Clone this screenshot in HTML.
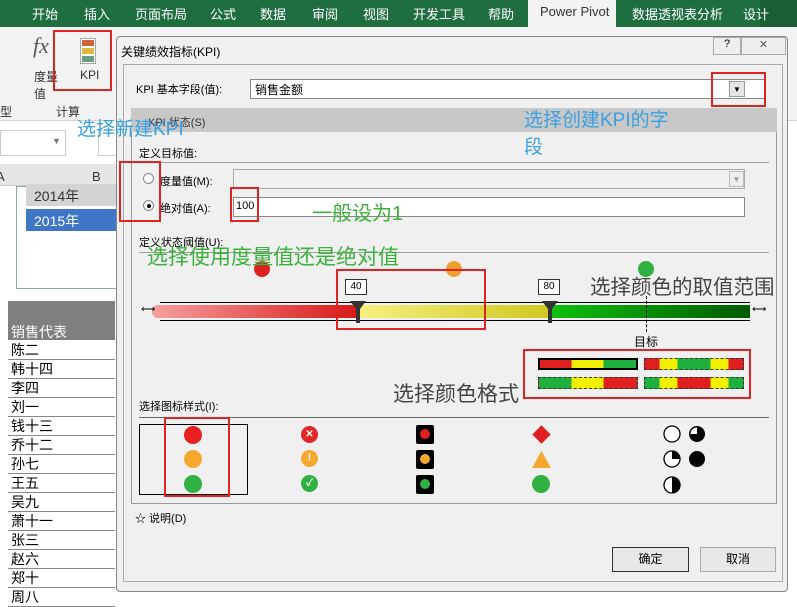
<!DOCTYPE html><html><head><meta charset="utf-8"><style>
*{margin:0;padding:0;box-sizing:border-box}
body{width:797px;height:594px;overflow:hidden;background:#fff;font-family:"Liberation Sans","Noto Sans CJK SC",sans-serif;font-size:12px;color:#000;position:relative}
.a{position:absolute;white-space:nowrap}
.rb{position:absolute;border:2.5px solid #e02424}
.dot{position:absolute;border-radius:50%}
.ln{position:absolute;height:1px;background:#a0a0a0}
</style></head><body>
<div class="a" style="left:0;top:0;width:797px;height:27px;background:#1f6e40"></div>
<div class="a" style="left:528px;top:0;width:88px;height:27px;background:#f3f3f3"></div>
<div class="a" style="top:4px;left:32px;color:#fff;font-size:13px">开始</div>
<div class="a" style="top:4px;left:84px;color:#fff;font-size:13px">插入</div>
<div class="a" style="top:4px;left:135px;color:#fff;font-size:13px">页面布局</div>
<div class="a" style="top:4px;left:210px;color:#fff;font-size:13px">公式</div>
<div class="a" style="top:4px;left:260px;color:#fff;font-size:13px">数据</div>
<div class="a" style="top:4px;left:312px;color:#fff;font-size:13px">审阅</div>
<div class="a" style="top:4px;left:363px;color:#fff;font-size:13px">视图</div>
<div class="a" style="top:4px;left:413px;color:#fff;font-size:13px">开发工具</div>
<div class="a" style="top:4px;left:488px;color:#fff;font-size:13px">帮助</div>
<div class="a" style="top:4px;left:540px;color:#333;font-size:13px">Power Pivot</div>
<div class="a" style="top:4px;left:632px;color:#fff;font-size:13px">数据透视表分析</div>
<div class="a" style="left:760px;top:0;width:37px;height:27px;background:#1a5e36"></div>
<div class="a" style="top:4px;left:743px;color:#fff;font-size:13px">设计</div>
<div class="a" style="left:0;top:27px;width:797px;height:94px;background:#f3f3f3;border-bottom:1px solid #d4d4d4"></div>
<div class="a" style="left:33px;top:33px;font-family:'Liberation Serif',serif;font-style:italic;font-size:22px;color:#555">fx</div>
<div class="a" style="left:80px;top:38px;width:16px;height:26px;background:#fff;border:1px solid #aaa"></div>
<div class="a" style="left:82px;top:40px;width:12px;height:6px;background:#c8663c"></div>
<div class="a" style="left:82px;top:48px;width:12px;height:6px;background:#e0b840"></div>
<div class="a" style="left:82px;top:56px;width:12px;height:6px;background:#6a9e84"></div>
<div class="a" style="left:34px;top:68px;color:#333">度量<br>值</div>
<div class="a" style="left:80px;top:68px;color:#333">KPI</div>
<div class="a" style="left:0;top:103px;color:#333">型</div>
<div class="a" style="left:56px;top:103px;color:#333">计算</div>
<div class="a" style="left:0;top:130px;width:66px;height:26px;background:#fff;border:1px solid #ccc"></div>
<div class="a" style="left:52px;top:136px;color:#777;font-size:9px">▼</div>
<div class="a" style="left:98px;top:130px;width:20px;height:26px;background:#fff;border:1px solid #ccc"></div>
<div class="a" style="left:0;top:164px;width:117px;height:22px;background:#e6e6e6;border-bottom:1px solid #ccc"></div>
<div class="a" style="left:-4px;top:169px;color:#333;font-size:13px">A</div>
<div class="a" style="left:92px;top:169px;color:#333;font-size:13px">B</div>
<div class="a" style="left:16px;top:186px;width:101px;height:103px;border:1px solid #8aa;background:#fff"></div>
<div class="a" style="left:26px;top:184px;width:91px;height:22px;background:#d4d4d4;color:#333;font-size:14px;padding:2px 8px">2014年</div>
<div class="a" style="left:26px;top:209px;width:91px;height:22px;background:#3f76c8;color:#fff;font-size:14px;padding:2px 8px">2015年</div>
<div class="a" style="left:8px;top:301px;width:107px;height:39px;background:#808080"></div>
<div class="a" style="left:11px;top:322px;color:#fff;font-size:14px">销售代表</div>
<div id="names"></div>
<div class="a" style="left:116px;top:36px;width:672px;height:556px;background:#f0f0f0;border:1px solid #888;border-radius:4px"></div>
<div class="a" style="left:121px;top:43px;font-size:12px">关键绩效指标(KPI)</div>
<div class="a" style="left:713px;top:37px;width:28px;height:18px;border:1px solid #aaa;background:#eee;text-align:center;font-size:11px">?</div>
<div class="a" style="left:741px;top:37px;width:45px;height:18px;border:1px solid #aaa;background:#eee;text-align:center;font-size:11px;color:#555">✕</div>
<div class="a" style="left:123px;top:64px;width:660px;height:518px;border:1px solid #aaa;background:#f0f0f0"></div>
<div class="a" style="left:136px;top:81px;font-size:11px">KPI 基本字段(值):</div>
<div class="a" style="left:250px;top:79px;width:515px;height:20px;background:#fff;border:1px solid #888;padding:1px 4px">销售金额</div>
<div class="a" style="left:729px;top:81px;width:16px;height:16px;background:#e6e6e6;border:1px solid #999;font-size:8px;text-align:center;line-height:15px">▼</div>
<div class="a" style="left:131px;top:108px;width:646px;height:24px;background:#c8c8c8"></div>
<div class="a" style="left:148px;top:114px;color:#333;font-size:11px">KPI 状态(S)</div>
<div class="a" style="left:131px;top:132px;width:646px;height:372px;border:1px solid #999;border-top:none"></div>
<div class="a" style="left:139px;top:145px;font-size:11px">定义目标值:</div>
<div class="ln" style="left:139px;top:162px;width:630px"></div>
<div class="a" style="left:143px;top:173px;width:11px;height:11px;border:1px solid #888;border-radius:50%;background:#fff"></div>
<div class="a" style="left:143px;top:200px;width:11px;height:11px;border:1px solid #888;border-radius:50%;background:#fff"></div>
<div class="dot" style="left:146.5px;top:203.5px;width:4px;height:4px;background:#000"></div>
<div class="a" style="left:160px;top:173px;font-size:11px">度量值(M):</div>
<div class="a" style="left:160px;top:200px;font-size:11px">绝对值(A):</div>
<div class="a" style="left:233px;top:169px;width:512px;height:20px;border:1px solid #aaa;background:#f0f0f0"></div>
<div class="a" style="left:729px;top:171px;width:15px;height:16px;border:1px solid #bbb;background:#eee;font-size:8px;color:#999;text-align:center;line-height:15px">▼</div>
<div class="a" style="left:233px;top:197px;width:512px;height:20px;border:1px solid #888;background:#fff;padding:2px 2px;font-size:11px">100</div>
<div class="a" style="left:139px;top:234px;font-size:11px">定义状态阈值(U):</div>
<div class="ln" style="left:139px;top:252px;width:630px"></div>
<div class="dot" style="left:254px;top:261px;width:16px;height:16px;background:#e02020"></div>
<div class="dot" style="left:446px;top:261px;width:16px;height:16px;background:#f0a030"></div>
<div class="dot" style="left:638px;top:261px;width:16px;height:16px;background:#30b040"></div>
<div class="a" style="left:160px;top:302px;width:590px;height:1px;background:#000"></div>
<div class="a" style="left:160px;top:320px;width:590px;height:1px;background:#000"></div>
<div class="a" style="left:152px;top:305px;width:206px;height:13px;background:linear-gradient(90deg,#f6a0a0,#d81818);border-radius:6px 0 0 6px"></div>
<div class="a" style="left:358px;top:305px;width:192px;height:13px;background:linear-gradient(90deg,#f6f080,#d0c820)"></div>
<div class="a" style="left:550px;top:305px;width:200px;height:13px;background:linear-gradient(90deg,#10c010,#005a00)"></div>
<div class="a" style="left:141px;top:304px;font-size:10px">⟷</div>
<div class="a" style="left:752px;top:304px;font-size:10px">⟷</div>
<div class="a" style="left:345px;top:279px;width:22px;height:16px;border:1px solid #333;background:#fff;font-size:10px;text-align:center;line-height:14px">40</div>
<div class="a" style="left:538px;top:279px;width:22px;height:16px;border:1px solid #333;background:#fff;font-size:10px;text-align:center;line-height:14px">80</div>
<svg class="a" style="left:348px;top:300px" width="20" height="24"><path d="M2 1h16l-6 8v14h-4V9z" fill="#333"/></svg>
<svg class="a" style="left:540px;top:300px" width="20" height="24"><path d="M2 1h16l-6 8v14h-4V9z" fill="#333"/></svg>
<div class="a" style="left:646px;top:296px;height:36px;border-left:1px dashed #000"></div>
<div class="a" style="left:634px;top:333px;font-size:12px">目标</div>
<div class="a" style="left:538px;top:358px;width:100px;height:12px;border:2px solid #000;background:linear-gradient(90deg,#e02020 33%,#f0f000 33% 66%,#20b040 66%)"></div>
<div class="a" style="left:644px;top:358px;width:100px;height:12px;border:1px dashed #333;background:linear-gradient(90deg,#e02020 15%,#f0f000 15% 33%,#20b040 33% 67%,#f0f000 67% 85%,#e02020 85%)"></div>
<div class="a" style="left:538px;top:377px;width:100px;height:12px;border:1px dashed #333;background:linear-gradient(90deg,#20b040 33%,#f0f000 33% 66%,#e02020 66%)"></div>
<div class="a" style="left:644px;top:377px;width:100px;height:12px;border:1px dashed #333;background:linear-gradient(90deg,#20b040 15%,#f0f000 15% 33%,#e02020 33% 67%,#f0f000 67% 85%,#20b040 85%)"></div>
<div class="a" style="left:139px;top:398px;font-size:11px">选择图标样式(I):</div>
<div class="ln" style="left:139px;top:417px;width:630px;background:#666"></div>
<div class="a" style="left:139px;top:424px;width:109px;height:71px;border:1px solid #000"></div>
<div class="dot" style="left:184px;top:426px;width:18px;height:18px;background:#e82020"></div>
<div class="dot" style="left:184px;top:450px;width:18px;height:18px;background:#f5a830"></div>
<div class="dot" style="left:184px;top:475px;width:18px;height:18px;background:#30b040"></div>
<div class="dot" style="left:301px;top:426px;width:17px;height:17px;background:#e02828;color:#fff;font-size:10px;text-align:center;line-height:17px;font-weight:bold">✕</div>
<div class="dot" style="left:301px;top:450px;width:17px;height:17px;background:#f5a830;color:#fff;font-size:11px;text-align:center;line-height:17px;font-weight:bold">!</div>
<div class="dot" style="left:301px;top:475px;width:17px;height:17px;background:#30b040;color:#fff;font-size:10px;text-align:center;line-height:17px;font-weight:bold">✓</div>
<div class="a" style="left:416px;top:425px;width:18px;height:19px;background:#000;border-radius:2px"></div><div class="dot" style="left:420px;top:429px;width:10px;height:10px;background:#e02020"></div>
<div class="a" style="left:416px;top:450px;width:18px;height:19px;background:#000;border-radius:2px"></div><div class="dot" style="left:420px;top:454px;width:10px;height:10px;background:#f5a830"></div>
<div class="a" style="left:416px;top:475px;width:18px;height:19px;background:#000;border-radius:2px"></div><div class="dot" style="left:420px;top:479px;width:10px;height:10px;background:#30b040"></div>
<div class="a" style="left:535px;top:428px;width:13px;height:13px;background:#e02020;transform:rotate(45deg)"></div>
<svg class="a" style="left:532px;top:451px" width="19" height="17"><path d="M9.5 0L19 17H0z" fill="#f5a830"/></svg>
<div class="dot" style="left:532px;top:475px;width:18px;height:18px;background:#30b040"></div>
<svg class="a" style="left:662px;top:424px" width="50" height="72">
<circle cx="10" cy="10" r="8" fill="#fff" stroke="#000" stroke-width="1.3"/>
<circle cx="35" cy="10" r="8" fill="#000"/><path d="M35 10V3.5A6.5 6.5 0 0 0 28.5 10z" fill="#fff"/>
<circle cx="10" cy="35" r="8" fill="#fff" stroke="#000" stroke-width="1.3"/><path d="M10 35V27A8 8 0 0 1 18 35z" fill="#000"/>
<circle cx="35" cy="35" r="8" fill="#000"/>
<circle cx="10" cy="61" r="8" fill="#fff" stroke="#000" stroke-width="1.3"/><path d="M10 53A8 8 0 0 1 10 69z" fill="#000"/>
</svg>
<div class="a" style="left:135px;top:510px;font-size:11px">☆ 说明(D)</div>
<div class="a" style="left:612px;top:547px;width:77px;height:25px;border:1px solid #333;background:#e8e8e8;text-align:center;line-height:23px">确定</div>
<div class="a" style="left:700px;top:547px;width:76px;height:25px;border:1px solid #aaa;background:#e8e8e8;text-align:center;line-height:23px">取消</div>
<div class="a" style="left:77px;top:114px;color:#3aa0e0;font-size:19px">选择新建KPI</div>
<div class="a" style="left:524px;top:107px;color:#3aa0e0;font-size:19px;line-height:27px">选择创建KPI的字<br>段</div>
<div class="a" style="left:312px;top:197px;color:#3cb03c;font-size:20px">一般设为1</div>
<div class="a" style="left:147px;top:241px;color:#3cb03c;font-size:21px">选择使用度量值还是绝对值</div>
<div class="a" style="left:590px;top:270px;color:#444;font-size:20.5px">选择颜色的取值范围</div>
<div class="a" style="left:393px;top:378px;color:#444;font-size:21px">选择颜色格式</div>
<div class="rb" style="left:53px;top:30px;width:59px;height:61px"></div>
<div class="rb" style="left:119px;top:161px;width:42px;height:61px"></div>
<div class="rb" style="left:230px;top:187px;width:29px;height:35px"></div>
<div class="rb" style="left:711px;top:72px;width:55px;height:35px"></div>
<div class="rb" style="left:336px;top:269px;width:150px;height:61px"></div>
<div class="rb" style="left:523px;top:349px;width:228px;height:50px"></div>
<div class="rb" style="left:164px;top:417px;width:66px;height:80px"></div>
<script>
var n=["陈二","韩十四","李四","刘一","钱十三","乔十二","孙七","王五","吴九","萧十一","张三","赵六","郑十","周八"],h="";
for(var i=0;i<n.length;i++){var t=341+i*19;h+='<div class="a" style="left:8px;top:'+t+'px;width:107px;height:19px;border-bottom:1px solid #888;font-size:14px;padding-left:3px;line-height:19px">'+n[i]+'</div>';}
document.getElementById("names").innerHTML=h;
</script>
</body></html>
